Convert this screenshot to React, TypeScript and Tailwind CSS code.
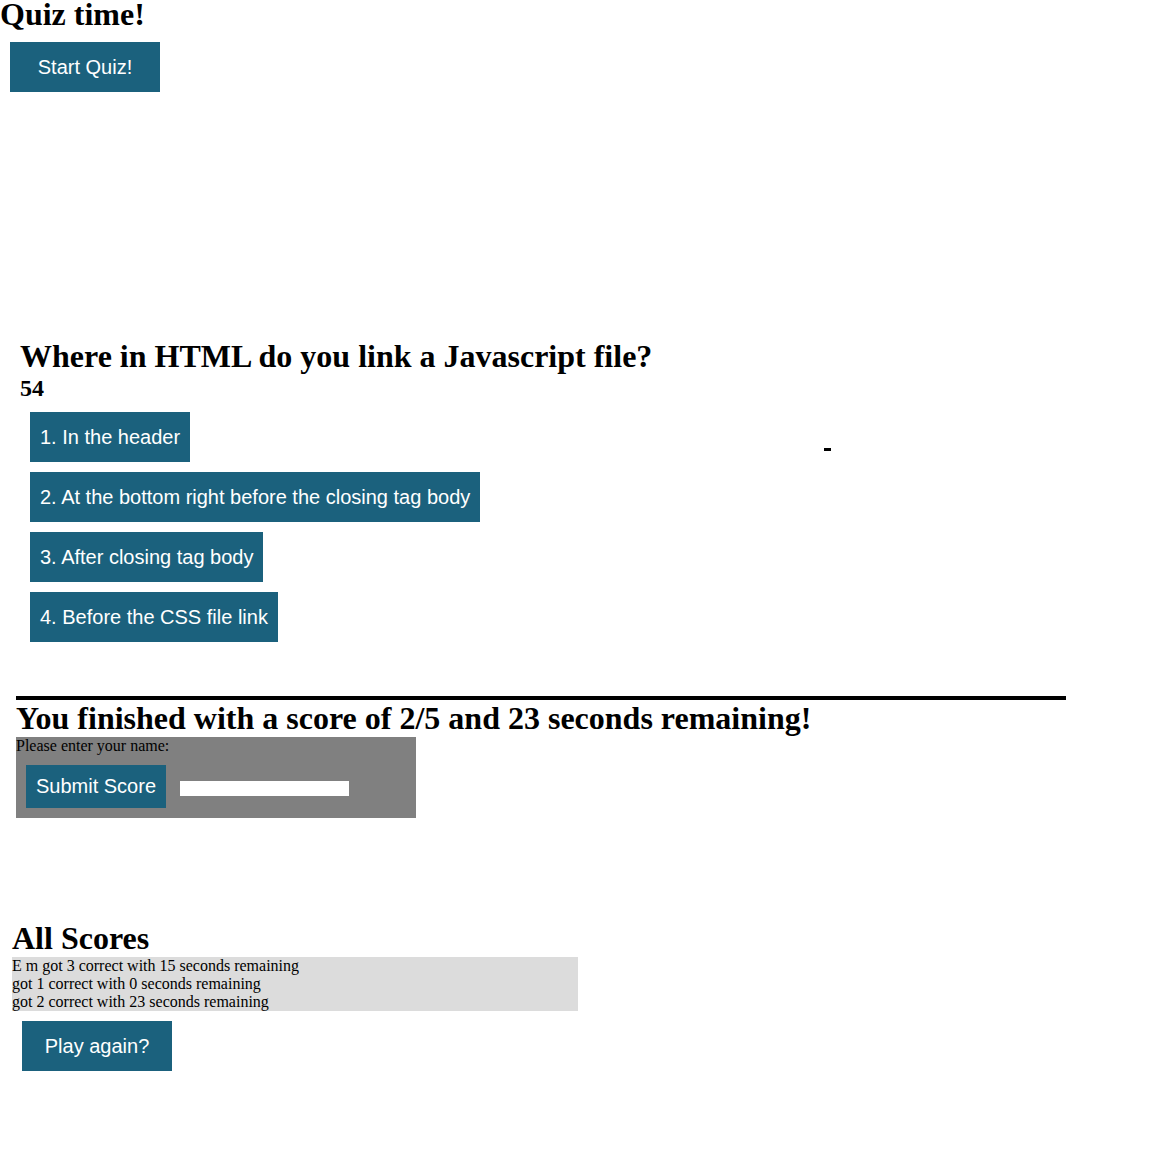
import React from "react";

const btn =
  "bg-[#1b617d] text-white text-[20px] leading-[23px] font-['Liberation_Sans',Arial,sans-serif] border-0 cursor-pointer";

export default function App() {
  const answers = [
    "1. In the header",
    "2. At the bottom right before the closing tag body",
    "3. After closing tag body",
    "4. Before the CSS file link",
  ];
  const scores = [
    "E m got 3 correct with 15 seconds remaining",
    "got 1 correct with 0 seconds remaining",
    "got 2 correct with 23 seconds remaining",
  ];
  return (
    <div className="w-[1176px] min-h-[1172px] bg-white text-black font-['Liberation_Serif','Times_New_Roman',serif] overflow-hidden">
      <h1 className="text-[32px] font-bold leading-[28px]">Quiz time!</h1>
      <button className={`${btn} block ml-[10px] mt-[14px] w-[150px] h-[50px]`}>Start Quiz!</button>

      <section className="mt-[246px] pl-[20px]">
        <h2 className="text-[32px] font-bold leading-[36px]">
          Where in HTML do you link a Javascript file?
        </h2>
        <div className="text-[24px] font-bold leading-[28px]">54</div>
        <div className="flex flex-col gap-[10px] mt-[10px] pl-[10px]">
          {answers.map((a, i) => (
            <div key={a} className="flex items-start">
              <button className={`${btn} h-[50px] px-[10px] whitespace-nowrap`}>{a}</button>
              {i === 0 && <div className="ml-[634px] mt-[36px] w-[7px] h-[3px] bg-black" />}
            </div>
          ))}
        </div>
      </section>

      <section className="mt-[54px] ml-[16px]">
        <div className="w-[1050px] h-[4px] bg-black" />
        <h2 className="text-[32px] font-bold leading-[36px]">
          You finished with a score of 2/5 and 23 seconds remaining!
        </h2>
        <div className="mt-[1px] w-[400px] h-[81px] bg-[#808080]">
          <div className="text-[16px] leading-[18px]">Please enter your name:</div>
          <div className="flex items-start">
            <button className={`${btn} ml-[10px] mt-[10px] w-[140px] h-[43px]`}>Submit Score</button>
            <div className="ml-[14px] mt-[26px] w-[169px] h-[15px] bg-white" />
          </div>
        </div>
      </section>

      <section className="mt-[102px] ml-[12px]">
        <h2 className="text-[32px] font-bold leading-[36px]">All Scores</h2>
        <div className="mt-[1px] w-[566px] bg-[#dcdcdc] text-[16px] leading-[18px]">
          {scores.map((s) => (
            <div key={s}>{s}</div>
          ))}
        </div>
        <button className={`${btn} block ml-[10px] mt-[10px] w-[150px] h-[50px]`}>Play again?</button>
      </section>
    </div>
  );
}
